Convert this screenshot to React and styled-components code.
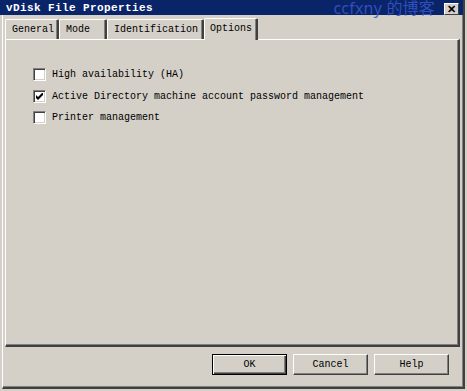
import React from "react";
import styled, { createGlobalStyle } from "styled-components";

const Global = createGlobalStyle`
  html, body { margin: 0; padding: 0; background: #d4d0c8; }
  * { box-sizing: border-box; }
`;

const Frame = styled.div`
  width: 467px;
  height: 391px;
  background: #d4d0c8;
  overflow: hidden;
`;

const Win = styled.div`
  display: flex;
  flex-direction: column;
  width: 463px;
  height: 389px;
  background: #d4d0c8;
  border-left: 1px solid #ffffff;
  border-right: 2px solid #404040;
  border-bottom: 2px solid #404040;
  box-shadow: inset -1px -1px 0 #808080;
  margin-left: 2px;
`;

const TitleBar = styled.div`
  display: flex;
  align-items: center;
  height: 15px;
  margin-left: -3px;
  padding: 0 4px 0 6px;
  background: #0a246a;
  color: #ffffff;
  font-family: "Liberation Mono", monospace;
  font-weight: bold;
  font-size: 11px;
  letter-spacing: 0.4px;
`;

const Watermark = styled.span`
  margin-left: auto;
  margin-right: 9px;
  margin-top: 2px;
  color: #3658c8;
  font-family: "Noto Sans", "Noto Sans CJK SC", sans-serif;
  font-weight: normal;
  font-size: 16px;
  line-height: 15px;
  letter-spacing: 0.2px;
  opacity: 0.85;
`;

const CloseBtn = styled.div`
  align-self: flex-end;
  width: 15px;
  height: 12px;
  background: #d4d0c8;
  border-top: 1px solid #ffffff;
  border-left: 1px solid #ffffff;
  border-right: 1px solid #404040;
  border-bottom: 1px solid #404040;
  display: flex;
  align-items: center;
  justify-content: center;
  color: #000;
  font-family: "Liberation Sans", sans-serif;
  font-weight: bold;
  font-size: 11px;
  letter-spacing: 0;
  line-height: 1;
`;

const Body = styled.div`
  flex: 1;
  display: flex;
  flex-direction: column;
  padding: 2px 0 0 2px;
`;

const TabStrip = styled.div`
  display: flex;
  align-items: flex-end;
  height: 22px;
  font-family: "Liberation Mono", monospace;
  font-size: 10px;
  color: #000;
`;

const Tab = styled.div`
  width: ${(p) => p.$w}px;
  height: ${(p) => (p.$active ? 22 : 20)}px;
  margin-bottom: ${(p) => (p.$active ? -1 : 0)}px;
  position: relative;
  z-index: ${(p) => (p.$active ? 2 : 1)};
  display: flex;
  align-items: center;
  padding-left: ${(p) => (p.$active ? 5 : 6)}px;
  padding-bottom: ${(p) => (p.$active ? 2 : 0)}px;
  background: #d4d0c8;
  border-top: 1px solid #ffffff;
  border-left: 1px solid #ffffff;
  border-right: 2px solid #404040;
  box-shadow: inset -1px 0 0 #808080;
  border-radius: 2px 2px 0 0;
`;

const Panel = styled.div`
  width: 455px;
  height: 308px;
  display: flex;
  flex-direction: column;
  gap: 8px;
  padding: 28px 0 0 27px;
  background: #d4d0c8;
  border-top: 1px solid #ffffff;
  border-left: 1px solid #ffffff;
  border-right: 2px solid #404040;
  border-bottom: 2px solid #404040;
  box-shadow: inset -1px -1px 0 #808080;
  font-family: "Liberation Mono", monospace;
  font-size: 10px;
  color: #000;
`;

const Row = styled.label`
  display: flex;
  align-items: center;
  height: 13.5px;
  gap: 6px;
`;

const Box = styled.span`
  width: 13px;
  height: 13px;
  flex: none;
  background: #ffffff;
  border-top: 1px solid #808080;
  border-left: 1px solid #808080;
  border-right: 1px solid #ffffff;
  border-bottom: 1px solid #ffffff;
  box-shadow: inset 1px 1px 0 #404040, inset -1px -1px 0 #d4d0c8;
  display: flex;
  align-items: center;
  justify-content: center;
`;

const Buttons = styled.div`
  display: flex;
  justify-content: flex-end;
  gap: 6px;
  padding: 7px 14px 0 0;
`;

const Button = styled.div`
  width: 75px;
  height: 21px;
  display: flex;
  align-items: center;
  justify-content: center;
  background: #d4d0c8;
  font-family: "Liberation Mono", monospace;
  font-size: 10px;
  color: #000;
  border-top: 1px solid ${(p) => (p.$default ? "#000" : "#ffffff")};
  border-left: 1px solid ${(p) => (p.$default ? "#000" : "#ffffff")};
  border-right: 1px solid ${(p) => (p.$default ? "#000" : "#404040")};
  border-bottom: 1px solid ${(p) => (p.$default ? "#000" : "#404040")};
  box-shadow: ${(p) =>
    p.$default
      ? "inset 1px 1px 0 #ffffff, inset -1px -1px 0 #404040, inset -2px -2px 0 #808080"
      : "inset -1px -1px 0 #808080"};
`;

const Check = () => (
  <svg width="7" height="7" viewBox="0 0 7 7">
    <path d="M0 2 L0 5 L2 7 L7 2 L7 -1 L2 4 Z" fill="#000" />
  </svg>
);

const options = [
  { label: "High availability (HA)", checked: false },
  { label: "Active Directory machine account password management", checked: true },
  { label: "Printer management", checked: false },
];

const tabs = [
  { name: "General", w: 54 },
  { name: "Mode", w: 48 },
  { name: "Identification", w: 97 },
  { name: "Options", w: 54, active: true },
];

export default function App() {
  return (
    <Frame>
      <Global />
      <Win>
        <TitleBar>
          vDisk File Properties
          <Watermark>ccfxny 的博客</Watermark>
          <CloseBtn>✕</CloseBtn>
        </TitleBar>
        <Body>
          <TabStrip>
            {tabs.map((t) => (
              <Tab key={t.name} $w={t.w} $active={t.active}>
                {t.name}
              </Tab>
            ))}
          </TabStrip>
          <Panel>
            {options.map((o) => (
              <Row key={o.label}>
                <Box>{o.checked && <Check />}</Box>
                {o.label}
              </Row>
            ))}
          </Panel>
          <Buttons>
            <Button $default>OK</Button>
            <Button>Cancel</Button>
            <Button>Help</Button>
          </Buttons>
        </Body>
      </Win>
    </Frame>
  );
}
